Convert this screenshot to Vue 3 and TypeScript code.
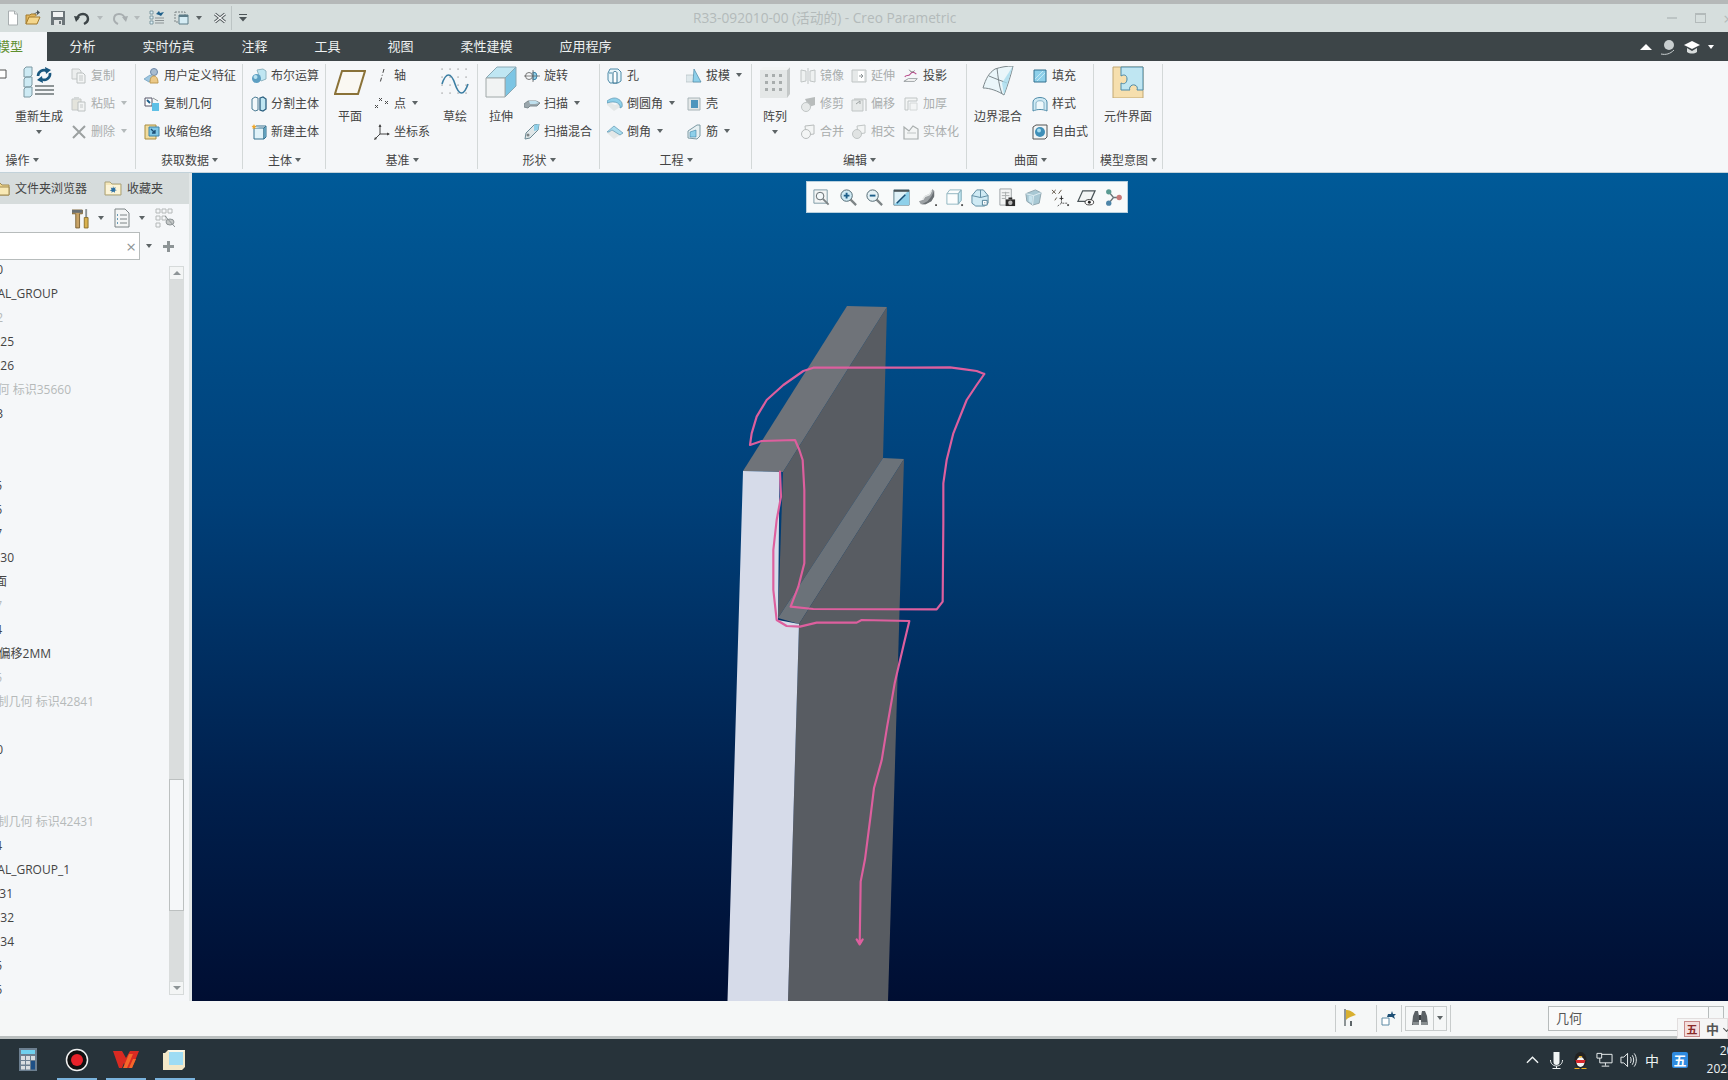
<template>
  <div class="app">
    <!-- icon sprite -->
    <svg class="sprite" aria-hidden="true">
      <symbol id="new" viewBox="0 0 16 16"><path d="M3.500 1h6l3 3v11h-9z" fill="#fff" stroke="#a8aeb0"/><path d="M9.500 1v3h3" fill="#e4e8e8" stroke="#a8aeb0"/></symbol>
      <symbol id="open" viewBox="0 0 16 16"><path d="M1 14V5h4l1-1h5v2" fill="#e0b65e" stroke="#a37a2c"/><path d="M1 14l3-7h11l-3 7z" fill="#f4d68c" stroke="#a37a2c"/><path d="M8 4l4-2v-2l3 2.500-3 2.500v-2z" fill="#4d5558"/></symbol>
      <symbol id="save" viewBox="0 0 16 16"><path d="M1 1h14v14H1z" fill="#6c7579"/><path d="M3 2h10v5H3z" fill="#f2f4f4"/><path d="M4 10h8v5H4z" fill="#dfe3e3"/><path d="M9 11h2v3H9z" fill="#6c7579"/></symbol>
      <symbol id="undo" viewBox="0 0 16 16"><path d="M3 10c0-4 3-6 6-6s5 2 5 5-2 4-4 5" fill="none" stroke="#3d4548" stroke-width="2.400"/><path d="M0 6l6 1-4 5z" fill="#3d4548"/></symbol>
      <symbol id="redo" viewBox="0 0 16 16"><path d="M13 10c0-4-3-6-6-6s-5 2-5 5 2 4 4 5" fill="none" stroke="#a8aeb0" stroke-width="2"/><path d="M16 6l-6 1 4 5z" fill="#a8aeb0"/></symbol>
      <symbol id="regenlist" viewBox="0 0 16 16"><path d="M1 1h3v3H1zM1 6h3v3H1zM1 11h3v3H1z" fill="#dff1f7" stroke="#6d8a94" stroke-width=".8"/><path d="M6 8h9M6 10.500h9M6 13h9" stroke="#8d9496"/><path d="M7 4l3-3 1 2 4-1-3 4-2-1z" fill="#1d5f8a"/></symbol>
      <symbol id="win" viewBox="0 0 16 16"><path d="M1 2h10v10H1z" fill="none" stroke="#7d8486" stroke-dasharray="2 1"/><path d="M5 5h9v9H5z" fill="#d5ecf4" stroke="#5d7c88"/><path d="M5 5h9v2H5z" fill="#5d7c88"/></symbol>
      <symbol id="close" viewBox="0 0 16 16"><path d="M3 4l10 8M13 4L3 12" stroke="#4d5558" stroke-width="3"/><path d="M3 4l10 8M13 4L3 12" stroke="#f4f6f6" stroke-width="1.400"/></symbol>
      <symbol id="caretbar" viewBox="0 0 16 16"><path d="M4 4.500h8" stroke="#4d5558"/><path d="M4 7h8l-4 4.500z" fill="#4d5558"/></symbol>

      <symbol id="clip" viewBox="0 0 16 16"><path d="M-2 2h8v8h-8z" fill="#fff" stroke="#555"/></symbol>
      <symbol id="regen" viewBox="0 0 32 32"><path d="M1 3l2-2h6v8l-2 2H1zM1 13l2-2h6v8l-2 2H1zM1 23l2-2h6v8l-2 2H1z" fill="#cdeaf4" stroke="#7d98a2"/><path d="M15 10a6 6 0 0 1 9-5" fill="none" stroke="#19577f" stroke-width="2.600"/><path d="M22 1l6 3-5 4z" fill="#19577f"/><path d="M27 7a6 6 0 0 1-9 6" fill="none" stroke="#19577f" stroke-width="2.600"/><path d="M20 17l-6-3 5-4z" fill="#19577f"/><path d="M12 20h19M12 24h19M12 28h19" stroke="#8d9496" stroke-width="1.800"/></symbol>
      <symbol id="copy" viewBox="0 0 16 16"><path d="M1 1h7l2 2v8H1z" fill="#eceeee" stroke="#c4c8c8"/><path d="M6 5h6l2 2v8H6z" fill="#f3f5f5" stroke="#bcc1c1"/><path d="M8 8h4M8 10h4M8 12h4" stroke="#c4c8c8"/></symbol>
      <symbol id="paste" viewBox="0 0 16 16"><path d="M1 3h9v11H1z" fill="#e4e4dc" stroke="#c4c8c8"/><path d="M3 1h5v3H3z" fill="#d4d8d8"/><path d="M7 6h7v9H7z" fill="#f3f5f5" stroke="#bcc1c1"/><path d="M9 9h3M9 11h3" stroke="#c4c8c8"/></symbol>
      <symbol id="del" viewBox="0 0 16 16"><path d="M2 2l12 12M14 2L2 14" stroke="#9ca1a1" stroke-width="2"/></symbol>
      <symbol id="udf" viewBox="0 0 16 16"><path d="M0 11l6-4 4 2-5 5z" fill="#9fc7e0" stroke="#6a9cbd" stroke-width=".7"/><circle cx="10" cy="4" r="3.500" fill="#a8bcd0" stroke="#6c88a8"/><path d="M6 15c0-6 2-7 4-7s4 2 4 7z" fill="#ecc988" stroke="#c09a50"/></symbol>
      <symbol id="copygeom" viewBox="0 0 16 16"><path d="M1 2h7v8H1z" fill="#fff" stroke="#556"/><path d="M3 4l3 3" stroke="#1d5f8a" stroke-width="2"/><path d="M8 7h7v8H8z" fill="#5fc0e6"/><path d="M9 2l5 3" stroke="#8d9496"/></symbol>
      <symbol id="shrink" viewBox="0 0 16 16"><path d="M1 1h11v14H1z" fill="#f1dc9e" stroke="#a98d3e"/><path d="M5 3h10v9H5z" fill="#7fc7e6" stroke="#3f84a8"/><path d="M7 5l4 4M11 6v3H8" fill="none" stroke="#1d4f75" stroke-width="1.300"/></symbol>
      <symbol id="bool" viewBox="0 0 16 16"><path d="M6 2l6-1 3 2v8l-5 2z" fill="#bfe6f2" stroke="#8fb4c0"/><circle cx="5.500" cy="10.500" r="4.500" fill="#5d9fc2"/><circle cx="4.500" cy="9" r="2" fill="#b8e2f0"/></symbol>
      <symbol id="split" viewBox="0 0 16 16"><path d="M1 3l3-2 3 1v12l-3 1-3-2z" fill="#f3f8fa" stroke="#4d7d95"/><path d="M9 2l3-1 3 2v10l-3 2-3-1z" fill="#bfe6f2" stroke="#2a5f7f" stroke-width="1.300"/></symbol>
      <symbol id="newbody" viewBox="0 0 16 16"><path d="M3 4h10v11H3z" fill="#e0f2f8" stroke="#33708f"/><path d="M13 4l2-2v11l-2 2z" fill="#8ed0ea" stroke="#33708f"/><path d="M3 4l2-2h10" fill="#fff" stroke="#33708f"/><path d="M3 0l.8 1.700 1.700.3-1.300 1.300.3 1.700L3 4.200 1.500 5l.3-1.700L.5 2l1.700-.3z" fill="#f0a72b"/></symbol>
      <symbol id="axis" viewBox="0 0 16 16"><path d="M10 1L6 15" stroke="#444" stroke-dasharray="4 2 1 2"/></symbol>
      <symbol id="point" viewBox="0 0 16 16"><path d="M5 2l3 3M8 2L5 5M11 5l3 3M14 5l-3 3M1 9l3 3M4 9l-3 3" stroke="#4a4a4a"/></symbol>
      <symbol id="csys" viewBox="0 0 16 16"><path d="M6 1v9h9M6 10l-5 5" fill="none" stroke="#444"/><path d="M6 0l-1.500 3h3zM16 10l-3-1.500v3zM0 16l3-1-2-2z" fill="#444"/></symbol>
      <symbol id="revolve" viewBox="0 0 16 16"><circle cx="5" cy="8" r="3.500" fill="none" stroke="#777"/><path d="M9 4a4 4 0 0 1 0 8z" fill="#8ed0ea" stroke="#3f84a8"/><path d="M0 8h16M9 2v12" stroke="#666" stroke-width=".8"/></symbol>
      <symbol id="sweep" viewBox="0 0 16 16"><path d="M0 8l4-3h8l4 2-3 3H6l-2 2-4-1z" fill="#9aa6ac" stroke="#7d8a90"/><path d="M5 5h7l3 2-4 1H6z" fill="#bfe0ee"/></symbol>
      <symbol id="sblend" viewBox="0 0 16 16"><path d="M1 15l1-6 8-8 5-1-1 6-8 8z" fill="#dfe6e8" stroke="#6d8a94"/><path d="M10 1l5-1-1 6-4 1z" fill="#8ecfe8"/><circle cx="4" cy="11" r="1.500" fill="#7d8486"/></symbol>
      <symbol id="hole" viewBox="0 0 16 16"><path d="M1 5l2-4h8l3 3v9l-3 2H3l-2-3z" fill="#e8f5fa" stroke="#4d8aa8"/><path d="M6 5c0-2 4-2 4 0v10H6z" fill="#fff" stroke="#33708f"/><path d="M2 5h3" stroke="#4d8aa8"/></symbol>
      <symbol id="round" viewBox="0 0 16 16"><path d="M0 9l7 6 9-6V6L8 9 0 5z" fill="#e4e8e8"/><path d="M0 5c4-3 8-4 11-2 3 1 5 5 4 8l-2 1c1-4-4-8-13-5z" fill="#8ed0ea" stroke="#4d8aa8" stroke-width=".6"/></symbol>
      <symbol id="chamfer" viewBox="0 0 16 16"><path d="M0 9l7 6 9-6-8-4z" fill="#e4e8e8"/><path d="M0 8l7-6 9 7-3 2-8-5-3 2z" fill="#a8dcee" stroke="#4d8aa8" stroke-width=".6"/></symbol>
      <symbol id="draft" viewBox="0 0 16 16"><path d="M0 7h8l7 7H0z" fill="#dfe9ec" stroke="#b4c0c4" stroke-width=".7"/><path d="M8 1l7 13H7z" fill="#8ed0ea" stroke="#4d8aa8" stroke-width=".7"/></symbol>
      <symbol id="shell" viewBox="0 0 16 16"><path d="M2 2h12v12H2z" fill="#e4e8e8" stroke="#a8b4b8"/><path d="M5 4h7v8H5z" fill="#4d95bd"/></symbol>
      <symbol id="rib" viewBox="0 0 16 16"><path d="M2 14V7l9-6h3v11l-3 3z" fill="#e6f0f2" stroke="#7d9aa4"/><path d="M4 8l6-2v7H4z" fill="#8ed0ea" stroke="#3f84a8" stroke-width=".6"/></symbol>
      <symbol id="mirror" viewBox="0 0 16 16"><path d="M1 2l5 1v10l-5 1zM15 2l-5 1v10l5 1z" fill="#eef1f1" stroke="#c0c5c5"/><path d="M8 0v16" stroke="#c0c5c5"/></symbol>
      <symbol id="trim" viewBox="0 0 16 16"><path d="M5 3l10-2v8l-6 2z" fill="#b8bcbc"/><circle cx="6" cy="11" r="4.500" fill="#e6e9e9" stroke="#c0c5c5"/></symbol>
      <symbol id="merge" viewBox="0 0 16 16"><path d="M5 2l9-1v9l-8 1z" fill="#f3f5f5" stroke="#b8bcbc"/><circle cx="6" cy="10" r="4.500" fill="#f3f5f5" stroke="#b8bcbc"/></symbol>
      <symbol id="extend" viewBox="0 0 16 16"><path d="M1 2h14v12H1z" fill="#e6e9e9" stroke="#c0c5c5"/><path d="M7 3h6v10H7z" fill="#fff"/><path d="M8 8h4M10 6l2 2-2 2" fill="none" stroke="#8d9496"/></symbol>
      <symbol id="offset" viewBox="0 0 16 16"><path d="M1 4l11 0v11H1z" fill="#e6e9e9" stroke="#c0c5c5"/><path d="M3 3h12v12" fill="none" stroke="#b8bcbc"/><path d="M5 8l4-3M9 5v3" stroke="#9ca1a1"/></symbol>
      <symbol id="intersect" viewBox="0 0 16 16"><path d="M6 2l8-1v8l-7 1z" fill="#f3f5f5" stroke="#c0c5c5"/><circle cx="6" cy="10" r="4.500" fill="#e0e3e3" stroke="#c0c5c5"/></symbol>
      <symbol id="project" viewBox="0 0 18 16"><path d="M1 14l5-3h10l-3 3z" fill="#fff" stroke="#8d9496"/><path d="M2 9c2-3 4 0 6-3s4-3 7 0" fill="none" stroke="#b84a8a" stroke-width="1.200"/><path d="M7 1c2 3 4 3 6 1" fill="none" stroke="#666"/></symbol>
      <symbol id="thicken" viewBox="0 0 16 16"><path d="M2 2h12v3H5v9H2z" fill="#f3f5f5" stroke="#c0c5c5"/><path d="M7 7h7v7H7z" fill="#f3f5f5" stroke="#d4d8d8"/></symbol>
      <symbol id="solidify" viewBox="0 0 16 16"><path d="M1 15V3l5 4 4-5 5 3v10z" fill="#f3f5f5" stroke="#a8adad" stroke-width="1.200"/><path d="M4 9h9" stroke="#c0c5c5"/></symbol>
      <symbol id="fill" viewBox="0 0 16 16"><path d="M2 2h12v12H2z" fill="#8ed0ea" stroke="#33708f"/><path d="M3 11l8-8M5 13l8-8" stroke="#c5e8f4"/></symbol>
      <symbol id="style" viewBox="0 0 16 16"><path d="M1 15V6c0-6 14-6 14 0v9c-4-2-10-2-14 0z" fill="#cfeaf4" stroke="#4d8aa8"/><path d="M4 13V7c0-3 8-3 8 0v6" fill="#eef8fb" stroke="#4d8aa8" stroke-width=".6"/></symbol>
      <symbol id="free" viewBox="0 0 16 16"><path d="M1 3l3-2h11v12l-2 2H1z" fill="#f3f5f5" stroke="#555"/><circle cx="8" cy="8" r="5" fill="#3f8fb8"/><circle cx="7" cy="6.500" r="2" fill="#a8dcee"/></symbol>
      <symbol id="plane" viewBox="0 0 32 32"><path d="M8 5h23l-7 23H1z" fill="#faf8f2" stroke="#8a7238" stroke-width="2"/></symbol>
      <symbol id="sketch" viewBox="0 0 32 32"><path d="M3 15c4-12 9-12 13 0s9 12 13 0" fill="none" stroke="#3b7ea3" stroke-width="1.600" transform="translate(0 3)"/><path d="M3 3h.1M11 3h.1M19 3h.1M27 3h.1M3 11h.1M11 11h.1M19 11h.1M27 11h.1M3 19h.1M11 19h.1M19 19h.1M27 19h.1M3 27h.1M11 27h.1M19 27h.1M27 27h.1" stroke="#666" stroke-width="1.200" stroke-linecap="round"/></symbol>
      <symbol id="extrude" viewBox="0 0 32 32"><path d="M1 12L12 1h19L20 12z" fill="#bfe6f2" stroke="#89a8b4"/><path d="M20 12L31 1v19L20 31z" fill="#7cc5e4" stroke="#89a8b4"/><path d="M1 12h19v19H1z" fill="#f1f3f3" stroke="#a0a8a8"/></symbol>
      <symbol id="pattern" viewBox="0 0 32 32"><path d="M1 4h27v28H1z" fill="#e4e7e7"/><path d="M28 4l3-3v27l-3 4z" fill="#c4c8c8"/><path d="M1 4l3-3h27l-3 3z" fill="#f3f5f5"/><path d="M6 8h3v3H6zM13 8h3v3h-3zM20 8h3v3h-3zM6 15h3v3H6zM13 15h3v3h-3zM20 15h3v3h-3zM6 22h3v3H6zM13 22h3v3h-3zM20 22h3v3h-3z" fill="#a8adad"/></symbol>
      <symbol id="boundary" viewBox="0 0 32 32"><path d="M1 22C4 12 7 7 13 3c6-2 12-3 18-3-2 9-5 18-9 29C16 25 8 22 1 22z" fill="#eaf6fa" stroke="#7d888c"/><path d="M7 10c7 3 13 5 18 7M15 2c1 9 2 18 5 26" fill="none" stroke="#7d888c"/><path d="M20 17l11-17-9 29z" fill="#a8dcee" opacity=".8"/></symbol>
      <symbol id="comp" viewBox="0 0 32 32"><path d="M1 1h30v31H1z" fill="#f6dfae" stroke="#c0a772"/><path d="M9 1h22v23h-6c2-5-5-7-7-3-1 2 0 3 0 3h-9V17c4 2 6-1 6-4 0-4-3-5-6-3z" fill="#bfe6f2" stroke="#4d8aa8"/></symbol>

      <symbol id="folder" viewBox="0 0 18 18"><path d="M1 16V4h6l2 2h7v10z" fill="#f0d890" stroke="#a08a50"/><path d="M1 8h15v8H1z" fill="#f8e9b5" stroke="#a08a50"/></symbol>
      <symbol id="fav" viewBox="0 0 18 18"><path d="M1 16V3h5l2 2h9v11z" fill="#f5e7b8" stroke="#a9a17a"/><path d="M2 6h14v9H2z" fill="#fbf4d8"/><path d="M9 7l.8 2 2-.8-.9 2 1.900 1-2 .6.200 2L9 12.500 7.500 14l.2-2-2-.6 1.900-1-.9-2 2 .8z" fill="#2b6ea3"/></symbol>
      <symbol id="tools" viewBox="0 0 18 22"><path d="M0 2h11v4H8v15H4V6H0z" fill="#c9a468" stroke="#7d6436"/><path d="M0 2h11v3H0z" fill="#6a7074"/><path d="M14 1h2v9h-2z" fill="#8d9496"/><path d="M13 10h4v11h-4z" fill="#d9b14e" stroke="#8a6f2a"/></symbol>
      <symbol id="doc" viewBox="0 0 16 20"><path d="M1 1h10l4 4v14H1z" fill="#f3f5f5" stroke="#7d8486"/><path d="M6 7h7M6 11h7M6 15h7" stroke="#7d8486"/><path d="M3 7h1M3 11h1M3 15h1" stroke="#3b7ea3" stroke-width="1.500"/></symbol>
      <symbol id="treehide" viewBox="0 0 20 20"><path d="M1 1h4v4H1zM7 1h4v4H7zM13 1h4v4h-4zM1 8h4v4H1zM7 8h4v4H7zM1 15h4v4H1z" fill="none" stroke="#b4b8b8"/><ellipse cx="15" cy="14" rx="4" ry="3" fill="#c4c8c8" stroke="#8d9496"/><path d="M10 8l10 11" stroke="#8d9496"/></symbol>

      <symbol id="t1" viewBox="0 0 20 20"><path d="M2 2h14v14H2z" fill="#f3f5f5" stroke="#7d9aa4"/><circle cx="8.500" cy="8.500" r="4" fill="#f3f8fa" stroke="#5d6568"/><path d="M11.500 11.500l6 6" stroke="#7d8486" stroke-width="2"/></symbol>
      <symbol id="t2" viewBox="0 0 20 20"><circle cx="8" cy="8" r="6" fill="#cfeaf4" stroke="#4d6570"/><path d="M5 8h6M8 5v6" stroke="#1d5f8a" stroke-width="2"/><path d="M12 12l6 6" stroke="#7d8486" stroke-width="2.400"/></symbol>
      <symbol id="t3" viewBox="0 0 20 20"><circle cx="8" cy="8" r="6" fill="#e6f2f6" stroke="#4d6570"/><path d="M5 8h6" stroke="#1d5f8a" stroke-width="2"/><path d="M12 12l6 6" stroke="#7d8486" stroke-width="2.400"/></symbol>
      <symbol id="t4" viewBox="0 0 20 20"><path d="M2 2h16v16H2z" fill="#dff1f7" stroke="#5d7c88"/><path d="M2 18L18 2v16z" fill="#8ed0ea"/><path d="M2 3h16" stroke="#4a5458" stroke-width="2"/><path d="M5 16l9-9" stroke="#1d4f75" stroke-width="1.500"/></symbol>
      <symbol id="t5" viewBox="0 0 20 20"><path d="M1 14l5-2 2-4 5-2 2-5 2 2v6l-3 5-6 3H3z" fill="#9ca1a4"/><path d="M4 17l6-3 4-5 3-6v6l-3 5-6 3H3z" fill="#6a7074"/><path d="M5 12l2-3 5-2 2-4" fill="none" stroke="#e4e7e7" stroke-width="1.500"/><path d="M18 17h2v2h-2z" fill="#555"/></symbol>
      <symbol id="t6" viewBox="0 0 20 20"><path d="M2 6l3-4h12v11l-3 4H2z" fill="#fbfdfd" stroke="#8fb4c0"/><path d="M14 6l3-4v11l-3 4z" fill="#bfe6f2" stroke="#8fb4c0"/><path d="M2 6h12v11M14 6l3-4" fill="none" stroke="#8fb4c0"/><path d="M17 17h2v2h-2z" fill="#555"/></symbol>
      <symbol id="t7" viewBox="0 0 20 20"><path d="M1 8l5-6h7l5 6v8l-4 3H5l-4-3z" fill="#cfeaf4" stroke="#5d8aa0"/><path d="M1 8l9 2 8-2M10 2v8" fill="none" stroke="#5d8aa0"/><path d="M12 13h5v5h-5z" fill="#fff" stroke="#4d7d95"/><path d="M14 15h1v1h-1z" fill="#4d7d95"/></symbol>
      <symbol id="t8" viewBox="0 0 20 20"><path d="M2 1h12v17H2z" fill="#f3f5f5" stroke="#9ca1a4"/><path d="M4 5h8M4 8h8M4 11h4M8 4v8" stroke="#a8adad"/><path d="M8 12h10v7H8z" fill="#2c2c2c"/><circle cx="13" cy="15.500" r="2.300" fill="#bbb"/><path d="M11 10h4v2h-4z" fill="#2c2c2c"/></symbol>
      <symbol id="t9" viewBox="0 0 20 20"><path d="M2 6l10-4 6 3-2 11-7 2-6-4z" fill="#a8c8d4" stroke="#8da4ae"/><path d="M2 6l8 2 8-3M10 8l-1 10" fill="none" stroke="#e0eef3"/><path d="M5 8l4 1-1 7-3-2z" fill="#c8e4ee"/></symbol>
      <symbol id="t10" viewBox="0 0 20 20"><path d="M1 2l4 4M5 2L1 6M8 6l3-4M4 13l2-3" stroke="#5d5040"/><path d="M11 8v8h7M11 16l-4 3" stroke="#555" fill="none" stroke-dasharray="2 1"/><path d="M9 11h4M11 9v4" stroke="#333"/><path d="M17 17h2v2h-2z" fill="#555"/></symbol>
      <symbol id="t11" viewBox="0 0 20 20"><path d="M6 3h13l-5 11H1z" fill="#f3f5f5" stroke="#4a5458" stroke-width="1.300"/><ellipse cx="13" cy="15" rx="4.500" ry="2.800" fill="#fff" stroke="#333"/><circle cx="13" cy="15" r="1.500" fill="#222"/></symbol>
      <symbol id="t12" viewBox="0 0 20 20"><path d="M5 4l5 6-5 6M10 10h7" stroke="#6a7478" fill="none" stroke-width="1.400"/><circle cx="5" cy="4" r="2.800" fill="#5a9a92"/><circle cx="5" cy="16" r="2.800" fill="#4d85a8"/><circle cx="16" cy="10" r="2.800" fill="#c87a7a"/></symbol>

      <symbol id="flag" viewBox="0 0 14 18"><path d="M1 0h2v17H1z" fill="#8d9496"/><path d="M3 1c3 0 6 1 10 5-3 1-7 2-10 5z" fill="#d8b030"/><path d="M7 12h2v5H7z" fill="#5d6568"/></symbol>
      <symbol id="selectmove" viewBox="0 0 16 16"><path d="M1 8h7v7H1z" fill="#fff" stroke="#5d8aa4"/><path d="M6 7l1-3 3 0 1-3 1 3 3 0-2 2 1 3-3-2z" fill="#1d4f75"/></symbol>
      <symbol id="binoc" viewBox="0 0 18 18"><path d="M1 16l1-9 2-5h3l1 5v9zM10 16V7l1-5h3l2 5 1 9z" fill="#5a6064"/><path d="M8 6h2v5H8z" fill="#3b3f42"/><path d="M2 16h6v-3H2zM10 16h7v-3h-7z" fill="#888e90"/></symbol>

      <symbol id="calc" viewBox="0 0 18 23"><path d="M0 0h18v23H0z" fill="#6c7f90"/><path d="M2 2h14v4H2z" fill="#6fd0ee"/><path d="M2 8h4v4H2zM7 8h4v4H7zM12 8h4v4h-4zM2 13h4v3.500H2zM7 13h4v3.500H7zM2 18h4v3.500H2zM7 18h4v3.500H7z" fill="#d8dde0"/><path d="M12 13h4v8.500h-4z" fill="#1d4f85"/></symbol>
      <symbol id="rec" viewBox="0 0 24 24"><circle cx="12" cy="12" r="10.500" fill="#111" stroke="#f0f0f0" stroke-width="1.500"/><circle cx="12" cy="12" r="6" fill="#e8222a"/></symbol>
      <symbol id="wps" viewBox="0 0 26 22"><path d="M0 2h9l4 7 4-7h9l-7 17h-6l-2-5-2 5H6z" fill="#d92a22"/><path d="M10 19l6-14h4l-6 14zM16 19l4-9h3l-4 9z" fill="#f4682a"/></symbol>
      <symbol id="cube" viewBox="0 0 22 22"><path d="M2 4l3-3h17v17l-3 3H0V4z" fill="#f3e8c8"/><path d="M6 3h14v13H6z" fill="#9edcf4"/><path d="M5 1h17l-2 2H6z" fill="#fbf7e8"/></symbol>
      <symbol id="chev" viewBox="0 0 14 8"><path d="M1 7l6-6 6 6" fill="none" stroke="#f0f4f4" stroke-width="1.500"/></symbol>
      <symbol id="mic" viewBox="0 0 14 18"><path d="M4 1h6v10a3 3 0 0 1-6 0z" fill="#f0f4f4"/><path d="M1 9c0 8 12 8 12 0M7 15v2M3 17.500h8" fill="none" stroke="#f0f4f4"/></symbol>
      <symbol id="qq" viewBox="0 0 16 18"><ellipse cx="8" cy="9" rx="6" ry="8" fill="#222"/><ellipse cx="8" cy="11" rx="4" ry="5" fill="#f4f4f4"/><path d="M3 9h10l-1 3H4z" fill="#d8282c"/><path d="M6 5l4 0-2 2z" fill="#f0b020"/><path d="M2 17h5v1H2zM9 17h5v1H9z" fill="#f0b020"/></symbol>
      <symbol id="net" viewBox="0 0 18 16"><path d="M4 2h13v9H4zM10 11v3M6 14.500h8" fill="none" stroke="#f0f4f4"/><path d="M1 1h5v5H1z" fill="#26323a" stroke="#f0f4f4"/></symbol>
      <symbol id="spk" viewBox="0 0 18 16"><path d="M1 5h3l4-4v14l-4-4H1z" fill="none" stroke="#f0f4f4"/><path d="M11 5c1 2 1 4 0 6M13 3c2 3 2 7 0 10M15 1c3 4 3 10 0 14" fill="none" stroke="#f0f4f4"/></symbol>
    </svg>

    <!-- title bar -->
    <div class="topstrip"></div>
    <div class="titlebar">
      <template v-for="(q, i) in quickAccess" :key="i">
        <i v-if="q.icon === 'caret'" class="caret" :class="{ faint: q.faint }" :style="{ marginLeft: q.ml + 'px' }"></i>
        <i v-else-if="q.icon === 'sep'" class="qat-sep" :style="{ marginLeft: q.ml + 'px' }"></i>
        <svg v-else class="ic" :style="{ marginLeft: q.ml + 'px' }"><use :href="'#' + q.icon" /></svg>
      </template>
      <div class="title">R33-092010-00 (活动的) - Creo Parametric</div>
      <div class="win-ctrls">
        <span class="w-min"></span>
        <span class="w-max"></span>
        <span class="w-close">×</span>
      </div>
    </div>

    <!-- tabs -->
    <div class="tabbar">
      <div class="tab active">模型</div>
      <div v-for="t in tabs" :key="t" class="tab">{{ t }}</div>
      <div class="tab-right">
        <svg class="up-ic" viewBox="0 0 14 8"><path d="M0 8l7-7 7 7z" fill="#fff" /></svg>
        <svg class="ic" viewBox="0 0 16 16"><circle cx="9" cy="6" r="5" fill="#c9cfd0" /><path d="M1 15c5 1 9 0 13-4" fill="none" stroke="#c9cfd0" /></svg>
        <svg class="ic" viewBox="0 0 16 16"><path d="M0 6l8-4 8 4-8 4z" fill="#fff" /><path d="M3 9v4c3 2 7 2 10 0V9l-5 3z" fill="#d8dcdc" /></svg>
        <i class="caret white"></i>
      </div>
    </div>

    <!-- ribbon -->
    <div class="ribbon">
      <div
        v-for="g in groups"
        :key="g.name"
        class="group"
        :style="{ width: g.width + 'px', marginLeft: (g.offset || 0) + 'px' }"
      >
        <div class="group-body" :style="{ paddingLeft: (g.pad || 0) + 'px' }">
          <div
            v-for="(c, ci) in g.cols"
            :key="ci"
            class="col"
            :class="{ big: c.big }"
            :style="{ width: c.w + 'px', marginLeft: (c.ml || 0) + 'px' }"
          >
            <template v-if="c.big">
              <div class="big-icon"><svg class="ic-big"><use :href="'#' + c.icon" /></svg></div>
              <div class="big-label">{{ c.label }}</div>
              <i v-if="c.caret" class="caret big-caret"></i>
            </template>
            <template v-else>
              <div v-for="r in c.rows" :key="r.icon" class="row" :class="{ off: r.off }">
                <svg class="ic"><use :href="'#' + r.icon" /></svg>
                <span v-if="r.label">{{ r.label }}</span>
                <i v-if="r.caret" class="caret"></i>
              </div>
            </template>
          </div>
        </div>
        <div class="group-label">{{ g.name }}<i class="caret"></i></div>
      </div>
    </div>

    <div class="main">
      <!-- model tree -->
      <aside class="sidebar">
        <div class="side-tabs">
          <svg class="side-folder"><use href="#folder" /></svg>
          <span class="side-tab-text">文件夹浏览器</span>
          <svg class="side-fav"><use href="#fav" /></svg>
          <span class="side-tab-text fav-text">收藏夹</span>
        </div>
        <div class="side-tools">
          <svg class="tool-hammer"><use href="#tools" /></svg>
          <i class="caret"></i>
          <svg class="tool-doc"><use href="#doc" /></svg>
          <i class="caret"></i>
          <svg class="tool-tree"><use href="#treehide" /></svg>
        </div>
        <div class="side-search">
          <div class="search-box"><span class="search-x">×</span></div>
          <i class="caret"></i>
          <span class="search-plus"></span>
        </div>
        <div class="side-list">
          <div class="tree">
            <div
              v-for="(r, i) in treeRows"
              :key="i"
              class="tree-row"
              :class="{ dim: r.dim }"
              :style="{ width: r.end + 'px' }"
            >{{ r.text }}</div>
          </div>
          <div class="scrollbar">
            <div class="sb-btn"><i class="sb-up"></i></div>
            <div class="sb-track before"></div>
            <div class="sb-thumb"></div>
            <div class="sb-track after"></div>
            <div class="sb-btn"><i class="sb-down"></i></div>
          </div>
        </div>
      </aside>

      <!-- graphics area -->
      <section class="canvas">
        <svg class="model" viewBox="192 173 1536 828">
          <polygon points="743,471 847,306 887,307 783,472" fill="#6f7379" />
          <polygon points="783,472 887,307 883,458 778,618" fill="#585c62" />
          <polygon points="883,458 904,459 799,624 778,618" fill="#6b7279" />
          <polygon points="904,459 888,1001 788,1001 799,624" fill="#585c62" />
          <polygon points="743,471 779.500,472 778,620 799,624 788,1001 727.500,1001" fill="#d6dbe9" />
          <g transform="translate(720 290) scale(.33333)" fill="none" stroke="#dd5f9e" stroke-width="6.500" stroke-linejoin="round" stroke-linecap="round">
            <path d="M793 252L770 243 735 238 690 232 570 233 280 233 250 243 190 285 140 330 110 380 95 430 90 465 125 453 225 450 238 480 248 510 253 600 253 820 235 890 212 950 280 957 650 958 668 935 670 700 670 580 680 510 700 430 740 330 770 285 793 252" />
            <path d="M180 545L183 620 170 690 160 780 160 900 170 990 200 1008 240 1010 290 998 410 998 425 990 568 993 551 1064 524 1180 501 1312 485 1411 462 1494 452 1576 435 1708 422 1775 419 1963M410 1948L419 1963 428 1948" />
          </g>
        </svg>
        <div class="view-toolbar">
          <div v-for="n in 12" :key="n" class="view-tool"><svg class="view-ic"><use :href="'#t' + n" /></svg></div>
        </div>
      </section>
    </div>

    <!-- status bar -->
    <div class="statusbar">
      <i class="st-sep first"></i>
      <svg class="st-flag"><use href="#flag" /></svg>
      <i class="st-sep after-flag"></i>
      <svg class="st-move"><use href="#selectmove" /></svg>
      <i class="st-sep after-move"></i>
      <div class="st-find">
        <span class="st-find-ic"><svg class="st-binoc"><use href="#binoc" /></svg></span>
        <span class="st-find-drop"><i class="caret"></i></span>
      </div>
      <i class="st-sep after-find"></i>
      <div class="st-filter">几何</div>
      <div class="st-filter-drop"></div>
    </div>

    <!-- windows taskbar -->
    <div class="taskbar">
      <div class="task"><svg class="task-calc"><use href="#calc" /></svg></div>
      <div class="task open"><svg class="task-rec"><use href="#rec" /></svg></div>
      <div class="task open"><svg class="task-wps"><use href="#wps" /></svg></div>
      <div class="task open"><svg class="task-cube"><use href="#cube" /></svg></div>
      <div class="tray">
        <div class="tray-item"><svg class="tray-chev"><use href="#chev" /></svg></div>
        <div class="tray-item"><svg class="tray-ic"><use href="#mic" /></svg></div>
        <div class="tray-item"><svg class="tray-ic"><use href="#qq" /></svg></div>
        <div class="tray-item"><svg class="tray-ic"><use href="#net" /></svg></div>
        <div class="tray-item"><svg class="tray-ic"><use href="#spk" /></svg></div>
        <div class="tray-item tray-text">中</div>
        <div class="tray-wu">五</div>
        <div class="clock">
          <div>20:15</div>
          <div>2023/9/15</div>
        </div>
      </div>
    </div>

    <!-- floating IME bar -->
    <div class="ime">
      <span class="ime-wu">五</span>
      <span class="ime-zh">中</span>
      <span class="ime-more"></span>
    </div>
  </div>
</template>

<script setup lang="ts">
interface Row {
  icon: string
  label?: string
  off?: boolean
  caret?: boolean
}

interface Col {
  w: number
  ml?: number
  big?: boolean
  icon?: string
  label?: string
  caret?: boolean
  rows?: Row[]
}

interface Group {
  name: string
  width: number
  offset?: number
  pad?: number
  cols: Col[]
}

const quickAccess: { icon: string; ml: number; faint?: boolean }[] = [
  { icon: 'new', ml: 5 },
  { icon: 'open', ml: 4 },
  { icon: 'save', ml: 9 },
  { icon: 'undo', ml: 8 },
  { icon: 'caret', ml: 7, faint: true },
  { icon: 'redo', ml: 9 },
  { icon: 'caret', ml: 6, faint: true },
  { icon: 'regenlist', ml: 9 },
  { icon: 'win', ml: 9 },
  { icon: 'caret', ml: 6 },
  { icon: 'close', ml: 10 },
  { icon: 'sep', ml: 3 },
  { icon: 'caretbar', ml: 3 }
]

const tabs = ['分析', '实时仿真', '注释', '工具', '视图', '柔性建模', '应用程序']

const groups: Group[] = [
  {
    name: '操作', width: 228, offset: -92, pad: 92,
    cols: [
      { w: 15, rows: [{ icon: 'clip' }] },
      { w: 48, big: true, icon: 'regen', label: '重新生成', caret: true },
      {
        w: 60, ml: 8,
        rows: [
          { icon: 'copy', label: '复制', off: true },
          { icon: 'paste', label: '粘贴', off: true, caret: true },
          { icon: 'del', label: '删除', off: true, caret: true }
        ]
      }
    ]
  },
  {
    name: '获取数据', width: 107,
    cols: [{
      w: 94, ml: 8,
      rows: [
        { icon: 'udf', label: '用户定义特征' },
        { icon: 'copygeom', label: '复制几何' },
        { icon: 'shrink', label: '收缩包络' }
      ]
    }]
  },
  {
    name: '主体', width: 83,
    cols: [{
      w: 70, ml: 8,
      rows: [
        { icon: 'bool', label: '布尔运算' },
        { icon: 'split', label: '分割主体' },
        { icon: 'newbody', label: '新建主体' }
      ]
    }]
  },
  {
    name: '基准', width: 152,
    cols: [
      { w: 30, ml: 9, big: true, icon: 'plane', label: '平面' },
      {
        w: 57, ml: 9,
        rows: [
          { icon: 'axis', label: '轴' },
          { icon: 'point', label: '点', caret: true },
          { icon: 'csys', label: '坐标系' }
        ]
      },
      { w: 30, ml: 9, big: true, icon: 'sketch', label: '草绘' }
    ]
  },
  {
    name: '形状', width: 122,
    cols: [
      { w: 32, ml: 7, big: true, icon: 'extrude', label: '拉伸' },
      {
        w: 70, ml: 7,
        rows: [
          { icon: 'revolve', label: '旋转' },
          { icon: 'sweep', label: '扫描', caret: true },
          { icon: 'sblend', label: '扫描混合' }
        ]
      }
    ]
  },
  {
    name: '工程', width: 152,
    cols: [
      {
        w: 79, ml: 7,
        rows: [
          { icon: 'hole', label: '孔' },
          { icon: 'round', label: '倒圆角', caret: true },
          { icon: 'chamfer', label: '倒角', caret: true }
        ]
      },
      {
        w: 60,
        rows: [
          { icon: 'draft', label: '拔模', caret: true },
          { icon: 'shell', label: '壳' },
          { icon: 'rib', label: '筋', caret: true }
        ]
      }
    ]
  },
  {
    name: '编辑', width: 215,
    cols: [
      { w: 30, ml: 8, big: true, icon: 'pattern', label: '阵列', caret: true },
      {
        w: 51, ml: 10,
        rows: [
          { icon: 'mirror', label: '镜像', off: true },
          { icon: 'trim', label: '修剪', off: true },
          { icon: 'merge', label: '合并', off: true }
        ]
      },
      {
        w: 52,
        rows: [
          { icon: 'extend', label: '延伸', off: true },
          { icon: 'offset', label: '偏移', off: true },
          { icon: 'intersect', label: '相交', off: true }
        ]
      },
      {
        w: 60,
        rows: [
          { icon: 'project', label: '投影' },
          { icon: 'thicken', label: '加厚', off: true },
          { icon: 'solidify', label: '实体化', off: true }
        ]
      }
    ]
  },
  {
    name: '曲面', width: 127,
    cols: [
      { w: 48, ml: 7, big: true, icon: 'boundary', label: '边界混合' },
      {
        w: 60, ml: 10,
        rows: [
          { icon: 'fill', label: '填充' },
          { icon: 'style', label: '样式' },
          { icon: 'free', label: '自由式' }
        ]
      }
    ]
  },
  {
    name: '模型意图', width: 69,
    cols: [{ w: 48, ml: 10, big: true, icon: 'comp', label: '元件界面' }]
  }
]

// the window is pushed off the left of the screen, so rows end at a given x and get cut
const treeRows: { text: string; end: number; dim?: boolean }[] = [
  { text: '拉伸 10', end: 3 },
  { text: 'LOCAL_GROUP', end: 58 },
  { text: '拉伸 22', end: 3, dim: true },
  { text: '拉伸 25', end: 14 },
  { text: '拉伸 26', end: 14 },
  { text: '复制几何 标识35660', end: 71, dim: true },
  { text: '拉伸 3', end: 3 },
  { text: '', end: 3 },
  { text: '', end: 3 },
  { text: '拉伸 5', end: 2 },
  { text: '拉伸 6', end: 2 },
  { text: '拉伸 7', end: 2 },
  { text: '拉伸 30', end: 14 },
  { text: '平面', end: 7 },
  { text: '拉伸 7', end: 2, dim: true },
  { text: '拉伸 4', end: 2 },
  { text: '偏移2MM', end: 51 },
  { text: '拉伸 5', end: 2, dim: true },
  { text: '复制几何 标识42841', end: 94, dim: true },
  { text: '', end: 3 },
  { text: '拉伸 0', end: 3 },
  { text: '', end: 3 },
  { text: '', end: 3 },
  { text: '复制几何 标识42431', end: 94, dim: true },
  { text: '拉伸 4', end: 2 },
  { text: 'LOCAL_GROUP_1', end: 70 },
  { text: '拉伸 31', end: 13 },
  { text: '拉伸 32', end: 14 },
  { text: '拉伸 34', end: 14 },
  { text: '拉伸 5', end: 2 },
  { text: '拉伸 6', end: 2 }
]
</script>

<style>
html,
body {
  margin: 0;
  overflow: hidden;
}
</style>

<style scoped>
.app {
  position: relative;
  display: flex;
  flex-direction: column;
  width: 1728px;
  height: 1080px;
  overflow: hidden;
  background: #f5f7f9;
  color: #444;
  font-family: "Open Sans", "Noto Sans CJK SC", sans-serif;
  font-size: 12px;
}

.sprite {
  position: absolute;
  width: 0;
  height: 0;
}

.ic {
  flex: none;
  width: 16px;
  height: 16px;
}

.caret {
  display: inline-block;
  flex: none;
  width: 0;
  height: 0;
  border-left: 3.5px solid transparent;
  border-right: 3.5px solid transparent;
  border-top: 4px solid #5d6466;
}

.caret.faint {
  border-top-color: #b4babb;
}

.caret.white {
  border-top-color: #fff;
}

/* title bar */
.topstrip {
  flex: none;
  height: 4px;
  background: #b5b8b8;
}

.titlebar {
  flex: none;
  display: flex;
  align-items: center;
  height: 28px;
  background: #d6dedd;
}

.qat-sep {
  flex: none;
  width: 1px;
  height: 24px;
  background: #bcc4c4;
}

.title {
  flex: none;
  width: 264px;
  margin-bottom: 2px;
  margin-left: 442px;
  color: #b3baba;
  font-size: 13.7px;
  white-space: nowrap;
}

.win-ctrls {
  flex: none;
  display: flex;
  align-items: center;
  margin-left: 701px;
}

.win-ctrls span {
  display: flex;
  flex: none;
  justify-content: center;
  width: 28px;
}

.w-min::before {
  content: "";
  width: 10px;
  height: 2px;
  background: #bcc4c4;
}

.w-max::before {
  content: "";
  width: 9px;
  height: 7px;
  border: 1px solid #b3baba;
  border-top-width: 2px;
}

.w-close {
  color: #b3baba;
  font-size: 17px;
  line-height: 17px;
}

/* tabs */
.tabbar {
  flex: none;
  display: flex;
  align-items: center;
  height: 29px;
  background: #3d4548;
}

.tab {
  flex: none;
  padding: 0 23.5px;
  color: #eef1f1;
  font-size: 13px;
  line-height: 29px;
}

.tab.active {
  box-sizing: border-box;
  display: flex;
  justify-content: flex-end;
  width: 47px;
  margin-right: -1px;
  padding: 0 24px 0 0;
  background: #f5f7f9;
  color: #5f8f2e;
  white-space: nowrap;
}

.tab-right {
  display: flex;
  align-items: center;
  gap: 8px;
  margin-left: auto;
  padding-right: 14px;
}

.up-ic {
  width: 12px;
  height: 7px;
}

/* ribbon */
.ribbon {
  flex: none;
  display: flex;
  height: 112px;
  background: #f5f7f9;
  box-sizing: border-box;
  border-bottom: 1px solid #c2d2da;
}

.group {
  position: relative;
  flex: none;
  box-sizing: border-box;
  display: flex;
  flex-direction: column;
}

.group::after {
  content: "";
  position: absolute;
  top: 3px;
  right: 0;
  bottom: 3px;
  width: 1px;
  background: #d3d8d8;
}

.group-body {
  display: flex;
  height: 86px;
}

.col {
  flex: none;
}

.col.big {
  display: flex;
  flex-direction: column;
  align-items: center;
}

.big-icon {
  display: flex;
  align-items: center;
  justify-content: center;
  height: 42px;
}

.ic-big {
  width: 32px;
  height: 32px;
}

.big-label {
  line-height: 28px;
  white-space: nowrap;
}

.big-caret {
  margin-top: -1px;
}

.row {
  display: flex;
  align-items: center;
  gap: 4px;
  height: 28px;
  white-space: nowrap;
}

.row .ic {
  margin-top: 2px;
}

.row .caret {
  margin-left: 2px;
}

.row.off {
  color: #a9adad;
}

.row.off .caret {
  border-top-color: #b4babb;
}

.group-label {
  display: flex;
  align-items: center;
  justify-content: center;
  gap: 3px;
  height: 25px;
  white-space: nowrap;
}

/* main */
.main {
  flex: none;
  display: flex;
  height: 828px;
}

.sidebar {
  box-sizing: border-box;
  flex: none;
  display: flex;
  flex-direction: column;
  width: 192px;
  border-right: 3px solid #e2e7e7;
  background: #f5f7f9;
  overflow: hidden;
}

.side-tabs {
  box-sizing: border-box;
  flex: none;
  display: flex;
  align-items: center;
  height: 31px;
  padding-bottom: 2px;
  background: #d6dcdc;
}

.side-folder {
  flex: none;
  width: 18px;
  height: 18px;
  margin-left: -7px;
}

.side-tab-text {
  margin-left: 4px;
  color: #444;
  white-space: nowrap;
}

.side-fav {
  flex: none;
  width: 18px;
  height: 18px;
  margin-left: 17px;
}

.fav-text {
  margin-left: 5px;
}

.side-tools {
  flex: none;
  display: flex;
  align-items: center;
  height: 28px;
  padding-left: 72px;
}

.tool-hammer {
  flex: none;
  width: 17px;
  height: 21px;
}

.side-tools .caret:nth-of-type(1) {
  margin-left: 9px;
}

.tool-doc {
  flex: none;
  width: 16px;
  height: 20px;
  margin-left: 10px;
}

.side-tools .caret:nth-of-type(2) {
  margin-left: 9px;
}

.tool-tree {
  flex: none;
  width: 20px;
  height: 20px;
  margin-left: 10px;
}

.side-search {
  flex: none;
  display: flex;
  align-items: center;
  height: 28px;
}

.search-box {
  box-sizing: border-box;
  display: flex;
  align-items: center;
  justify-content: flex-end;
  width: 141px;
  height: 28px;
  margin-left: -1px;
  padding-right: 3px;
  border: 1px solid #b7bcbc;
  background: #fff;
}

.search-x {
  color: #8d9496;
  font-size: 17px;
}

.side-search .caret {
  margin-left: 6px;
}

.search-plus {
  position: relative;
  width: 11px;
  height: 11px;
  margin-left: 11px;
  background:
    linear-gradient(#8d9496, #8d9496) center / 11px 3px no-repeat,
    linear-gradient(#8d9496, #8d9496) center / 3px 11px no-repeat;
}

.side-list {
  flex: 1;
  display: flex;
  min-height: 0;
}

.tree {
  flex: none;
  width: 169px;
  margin-top: -2px;
}

.tree-row {
  display: flex;
  justify-content: flex-end;
  height: 24px;
  color: #444;
  line-height: 24px;
  white-space: nowrap;
}

.tree-row.dim {
  color: #b6baba;
}

.scrollbar {
  flex: none;
  display: flex;
  flex-direction: column;
  width: 15px;
  height: 729px;
  margin-top: 6px;
}

.sb-btn {
  box-sizing: border-box;
  flex: none;
  display: flex;
  align-items: center;
  justify-content: center;
  height: 14px;
  border: 1px solid #d6dada;
  background: #f3f5f5;
}

.sb-up,
.sb-down {
  width: 0;
  height: 0;
  border-left: 4px solid transparent;
  border-right: 4px solid transparent;
}

.sb-up {
  border-bottom: 4px solid #8d9496;
}

.sb-down {
  border-top: 4px solid #8d9496;
}

.sb-track {
  background: #dadddd;
}

.sb-track.before {
  height: 499px;
}

.sb-track.after {
  height: 70px;
}

.sb-thumb {
  box-sizing: border-box;
  height: 132px;
  border: 1px solid #bcc0c0;
  background: #f5f7f9;
}

/* graphics area */
.canvas {
  position: relative;
  flex: 1;
  background: linear-gradient(#005a98 0%, #003f78 40%, #001f4c 75%, #000e32 100%);
}

.model {
  position: absolute;
  inset: 0;
  width: 100%;
  height: 100%;
}

.view-toolbar {
  position: absolute;
  top: 8px;
  left: 614px;
  box-sizing: border-box;
  display: flex;
  align-items: center;
  width: 322px;
  height: 32px;
  padding-left: 1.5px;
  border: 1px solid #b8d0de;
  background: #f8fafa;
}

.view-tool {
  flex: none;
  display: flex;
  justify-content: center;
  width: 26.5px;
}

.view-ic {
  width: 19px;
  height: 19px;
}

/* status bar */
.statusbar {
  box-sizing: border-box;
  flex: none;
  display: flex;
  align-items: center;
  justify-content: flex-end;
  height: 38px;
  padding: 0 4px 1px 0;
  border-bottom: 3px solid #babfbf;
  background: #f5f7f7;
}

.st-sep {
  flex: none;
  width: 1px;
  height: 27px;
  background: #c8cccc;
}

.st-flag {
  flex: none;
  width: 14px;
  height: 18px;
  margin-left: 7px;
}

.after-flag {
  margin-left: 19px;
}

.st-move {
  flex: none;
  width: 16px;
  height: 16px;
  margin-left: 4px;
}

.after-move {
  margin-left: 4px;
}

.st-find {
  box-sizing: border-box;
  flex: none;
  display: flex;
  width: 42px;
  height: 25px;
  margin-left: 3px;
  border: 1px solid #c8cccc;
}

.st-find-ic {
  display: flex;
  align-items: center;
  justify-content: center;
  width: 27px;
  border-right: 1px solid #c8cccc;
}

.st-binoc {
  width: 18px;
  height: 18px;
}

.st-find-drop {
  flex: 1;
  display: flex;
  align-items: center;
  justify-content: center;
}

.after-find {
  margin-left: 3px;
}

.st-filter {
  box-sizing: border-box;
  flex: none;
  width: 161px;
  height: 25px;
  margin-left: 97px;
  padding-left: 7px;
  border: 1px solid #b7bcbc;
  background: #f9fafa;
  color: #555;
  font-size: 13px;
  line-height: 23px;
}

.st-filter-drop {
  box-sizing: border-box;
  flex: none;
  width: 15px;
  height: 25px;
  border: 1px solid #b7bcbc;
  border-left: none;
}

/* taskbar */
.taskbar {
  flex: none;
  display: flex;
  height: 41px;
  background: #27333a;
  color: #eef2f2;
}

.task {
  position: relative;
  flex: none;
  display: flex;
  align-items: center;
  justify-content: center;
  width: 49px;
}

.task:first-child {
  margin-left: 3px;
}

.task.open::after {
  content: "";
  position: absolute;
  left: 5px;
  right: 4px;
  bottom: 0;
  height: 2px;
  background: #7ab3dc;
}

.task-calc {
  width: 18px;
  height: 23px;
}

.task-rec {
  width: 24px;
  height: 24px;
}

.task-wps {
  width: 26px;
  height: 22px;
}

.task-cube {
  width: 22px;
  height: 22px;
  margin-right: 2px;
}

.tray {
  flex: none;
  display: flex;
  align-items: center;
  margin-left: 1321px;
}

.tray-item {
  flex: none;
  display: flex;
  align-items: center;
  justify-content: center;
  width: 24px;
}

.tray-chev {
  width: 13px;
  height: 8px;
}

.tray-ic {
  width: 17px;
  height: 18px;
}

.tray-text {
  font-size: 14px;
}

.tray-wu {
  flex: none;
  width: 16px;
  height: 16px;
  margin-left: 8px;
  border-radius: 2px;
  background: #2f8be0;
  color: #fff;
  font-size: 13px;
  font-weight: 700;
  line-height: 16px;
  text-align: center;
}

.clock {
  flex: none;
  width: 60px;
  margin-left: 17px;
  font-size: 12px;
  line-height: 18px;
  text-align: center;
  white-space: nowrap;
}

/* floating IME bar */
.ime {
  position: absolute;
  right: 0;
  bottom: 41px;
  box-sizing: border-box;
  display: flex;
  align-items: center;
  width: 51px;
  height: 21px;
  padding-left: 6px;
  border: 1px solid #e2dede;
  background: #f5f5f5;
}

.ime-wu {
  flex: none;
  width: 14px;
  height: 14px;
  border: 1px solid #c88a8a;
  background: #f4dede;
  color: #8a2a2a;
  font-family: "Noto Sans CJK SC", serif;
  font-size: 11px;
  font-weight: 700;
  line-height: 14px;
  text-align: center;
}

.ime-zh {
  margin-left: 6px;
  color: #555;
  font-size: 13px;
  font-weight: 700;
}

.ime-more {
  flex: none;
  width: 4px;
  height: 4px;
  margin-left: 5px;
  border-right: 1px solid #555;
  border-bottom: 1px solid #555;
  transform: rotate(45deg);
}
</style>
